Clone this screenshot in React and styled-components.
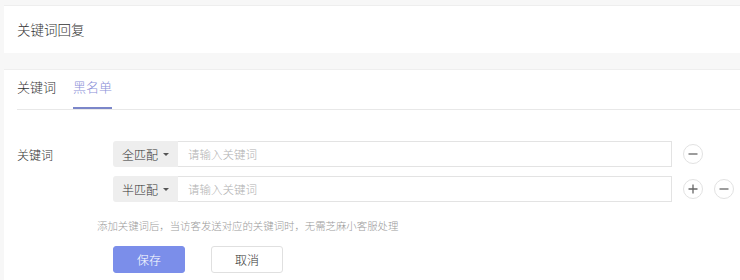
import React from "react";
import styled, { createGlobalStyle } from "styled-components";

const GlobalStyle = createGlobalStyle`
  body {
    margin: 0;
    background: #f7f7f7;
    font-family: "Noto Sans CJK SC", "Noto Sans", sans-serif;
    font-weight: 300;
    font-size: 13px;
    color: #333;
  }
`;

const Page = styled.div`
  padding: 5px 0 0 4px;
  width: 740px;
  box-sizing: border-box;
`;

const HeaderCard = styled.div`
  background: #fff;
  border-top: 1px solid #eeeeee;
  height: 48px;
  display: flex;
  align-items: center;
  padding: 0 0 2px 13px;
  box-sizing: border-box;
  color: #333;
  font-size: 13.5px;
`;

const BodyCard = styled.div`
  margin-top: 16px;
  background: #fff;
  border-top: 1px solid #eeeeee;
  padding: 0 0 10px 13px;
`;

const Tabs = styled.div`
  display: flex;
  gap: 17px;
  height: 39px;
  border-bottom: 1px solid #e8e8e8;
`;

const Tab = styled.div`
  position: relative;
  display: flex;
  align-items: center;
  padding-bottom: 7px;
  font-size: 13px;
  color: ${(p) => (p.$active ? "#8b90d8" : "#333")};
  &::after {
    content: "";
    position: absolute;
    left: 0;
    right: 0;
    bottom: 0;
    height: 2px;
    background: ${(p) => (p.$active ? "#7b86c9" : "transparent")};
  }
`;

const Form = styled.div`
  padding-top: 31px;
`;

const Row = styled.div`
  display: flex;
  align-items: center;
  height: 26px;
  margin-bottom: 9px;
`;

const Label = styled.div`
  width: 96px;
  font-size: 12px;
  color: #333;
`;

const InputGroup = styled.div`
  display: flex;
  width: 559px;
  height: 26px;
  box-sizing: border-box;
`;

const Addon = styled.div`
  width: 65px;
  display: flex;
  align-items: center;
  justify-content: center;
  gap: 5px;
  background: #eeeeee;
  border-radius: 3px 0 0 3px;
  font-size: 12px;
  color: #333;
`;

const Caret = styled.span`
  width: 0;
  height: 0;
  border-left: 3px solid transparent;
  border-right: 3px solid transparent;
  border-top: 3px solid #555;
`;

const Input = styled.input`
  flex: 1;
  border: 1px solid #e3e3e3;
  border-left: none;
  outline: none;
  padding: 0 10px;
  font-family: inherit;
  font-weight: 300;
  font-size: 11.5px;
  color: #333;
  &::placeholder {
    color: #b0b0b0;
  }
`;

const Actions = styled.div`
  display: flex;
  gap: 11px;
  margin-left: 11px;
`;

const CircleBtn = styled.button`
  width: 20px;
  height: 20px;
  padding: 0;
  border-radius: 50%;
  border: 1px solid #e2e2e2;
  background: #fff;
  display: flex;
  align-items: center;
  justify-content: center;
  cursor: pointer;
`;

const Help = styled.div`
  margin: 17px 0 0 80px;
  font-size: 10.4px;
  color: #9a9a9a;
  line-height: 14px;
`;

const Buttons = styled.div`
  display: flex;
  gap: 26px;
  margin: 13px 0 0 96px;
`;

const Button = styled.button`
  width: 72px;
  height: 27px;
  border-radius: 3px;
  font-family: inherit;
  font-weight: 300;
  font-size: 12px;
  cursor: pointer;
  border: 1px solid ${(p) => (p.$primary ? "#7b8eea" : "#e0e0e0")};
  background: ${(p) => (p.$primary ? "#7b8eea" : "#fff")};
  color: ${(p) => (p.$primary ? "#fff" : "#333")};
`;

const Minus = () => (
  <svg width="10" height="10" viewBox="0 0 10 10">
    <path d="M0.5 5h9" stroke="#666" strokeWidth="1.3" />
  </svg>
);

const Plus = () => (
  <svg width="10" height="10" viewBox="0 0 10 10">
    <path d="M0.5 5h9M5 0.5v9" stroke="#666" strokeWidth="1.3" />
  </svg>
);

const KeywordRow = ({ label, mode, canAdd }) => (
  <Row>
    <Label>{label}</Label>
    <InputGroup>
      <Addon>
        {mode}
        <Caret />
      </Addon>
      <Input placeholder="请输入关键词" />
    </InputGroup>
    <Actions>
      {canAdd && (
        <CircleBtn>
          <Plus />
        </CircleBtn>
      )}
      <CircleBtn>
        <Minus />
      </CircleBtn>
    </Actions>
  </Row>
);

export default function App() {
  return (
    <>
      <GlobalStyle />
      <Page>
        <HeaderCard>关键词回复</HeaderCard>
        <BodyCard>
          <Tabs>
            <Tab>关键词</Tab>
            <Tab $active>黑名单</Tab>
          </Tabs>
          <Form>
            <KeywordRow label="关键词" mode="全匹配" />
            <KeywordRow label="" mode="半匹配" canAdd />
            <Help>添加关键词后，当访客发送对应的关键词时，无需芝麻小客服处理</Help>
            <Buttons>
              <Button $primary>保存</Button>
              <Button>取消</Button>
            </Buttons>
          </Form>
        </BodyCard>
      </Page>
    </>
  );
}
